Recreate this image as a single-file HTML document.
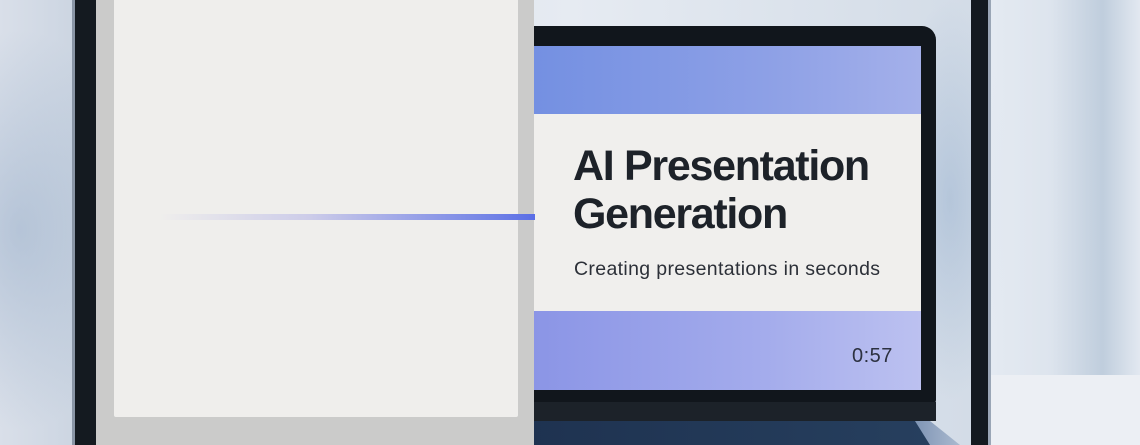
<!DOCTYPE html>
<html><head><style>
html,body{margin:0;padding:0}
body{width:1140px;height:445px;overflow:hidden;position:relative;font-family:"Liberation Sans",sans-serif;
background:linear-gradient(90deg,#d9dfe9 0%,#c9d3e0 8%,#d6dde8 15%,#e6ebf2 50%,#d3dce7 85%,#c2d0df 92%,#dfe5ee 100%)}
.a{position:absolute}
</style></head><body>
<div class="a" style="left:0;top:0;width:1140px;height:445px;background:radial-gradient(ellipse 120px 200px at 20px 230px,rgba(160,180,205,.6),transparent),radial-gradient(ellipse 60px 200px at 950px 200px,rgba(150,175,205,.5),transparent)"></div>
<div class="a" style="left:990px;top:0;width:150px;height:445px;background:linear-gradient(90deg,#e8edf4,#e2e8f0 40%,#bccbdb 75%,#e3e9f1);opacity:.85"></div>
<div class="a" style="left:990px;top:375px;width:150px;height:70px;background:#eceff4"></div>
<div class="a" style="left:72px;top:0;width:4px;height:445px;background:#8a96a6"></div>
<div class="a" style="left:75px;top:0;width:21px;height:445px;background:#141a20"></div>
<!-- laptop -->
<div class="a" style="left:520px;top:26px;width:416px;height:378px;background:#11161c;border-radius:0 14px 4px 0"></div>
<div class="a" style="left:520px;top:402px;width:416px;height:19px;background:#1c2229"></div>
<div class="a" style="left:520px;top:421px;width:440px;height:24px;background:linear-gradient(90deg,#1e3250,#27405f);clip-path:polygon(0 0,400px 0,430px 24px,0 24px)"></div>
<div class="a" style="left:915px;top:421px;width:60px;height:24px;background:linear-gradient(90deg,#7f95b5,#b9c6d8);clip-path:polygon(0 0,15px 0,45px 24px,15px 24px)"></div>
<div class="a" style="left:534px;top:46px;width:387px;height:68px;background:linear-gradient(90deg,#7490e2,#8da0e6 60%,#a4b0ea)"></div>
<div class="a" style="left:534px;top:114px;width:387px;height:197px;background:#f0efed"></div>
<div class="a" style="left:534px;top:311px;width:387px;height:79px;background:linear-gradient(90deg,#8b95e6,#a4acec 60%,#bcc1f0)"></div>
<div class="a" style="left:573px;top:142px;font-size:43px;line-height:48px;font-weight:bold;color:#1d2229;letter-spacing:-1.3px">AI Presentation<br>Generation</div>
<div class="a" style="left:574px;top:258px;font-size:19.5px;color:#2c3038;letter-spacing:0.35px">Creating presentations in seconds</div>
<div class="a" style="left:852px;top:345px;font-size:20px;color:#2c3140;letter-spacing:0.5px">0:57</div>
<!-- right dark bar -->
<div class="a" style="left:971px;top:0;width:17px;height:445px;background:#141a20"></div>
<div class="a" style="left:988px;top:0;width:3px;height:445px;background:#9aa6b6"></div>
<!-- gray panel -->
<div class="a" style="left:96px;top:0;width:438px;height:445px;background:#cbcbca"></div>
<div class="a" style="left:114px;top:0;width:404px;height:417px;background:#efeeec;border-radius:0 0 2px 2px"></div>
<div class="a" style="left:160px;top:214px;width:375px;height:6px;background:linear-gradient(90deg,rgba(120,130,230,0),rgba(170,170,230,.5) 40%,#6f80e6 90%,#5a6ee6)"></div>
</body></html>
